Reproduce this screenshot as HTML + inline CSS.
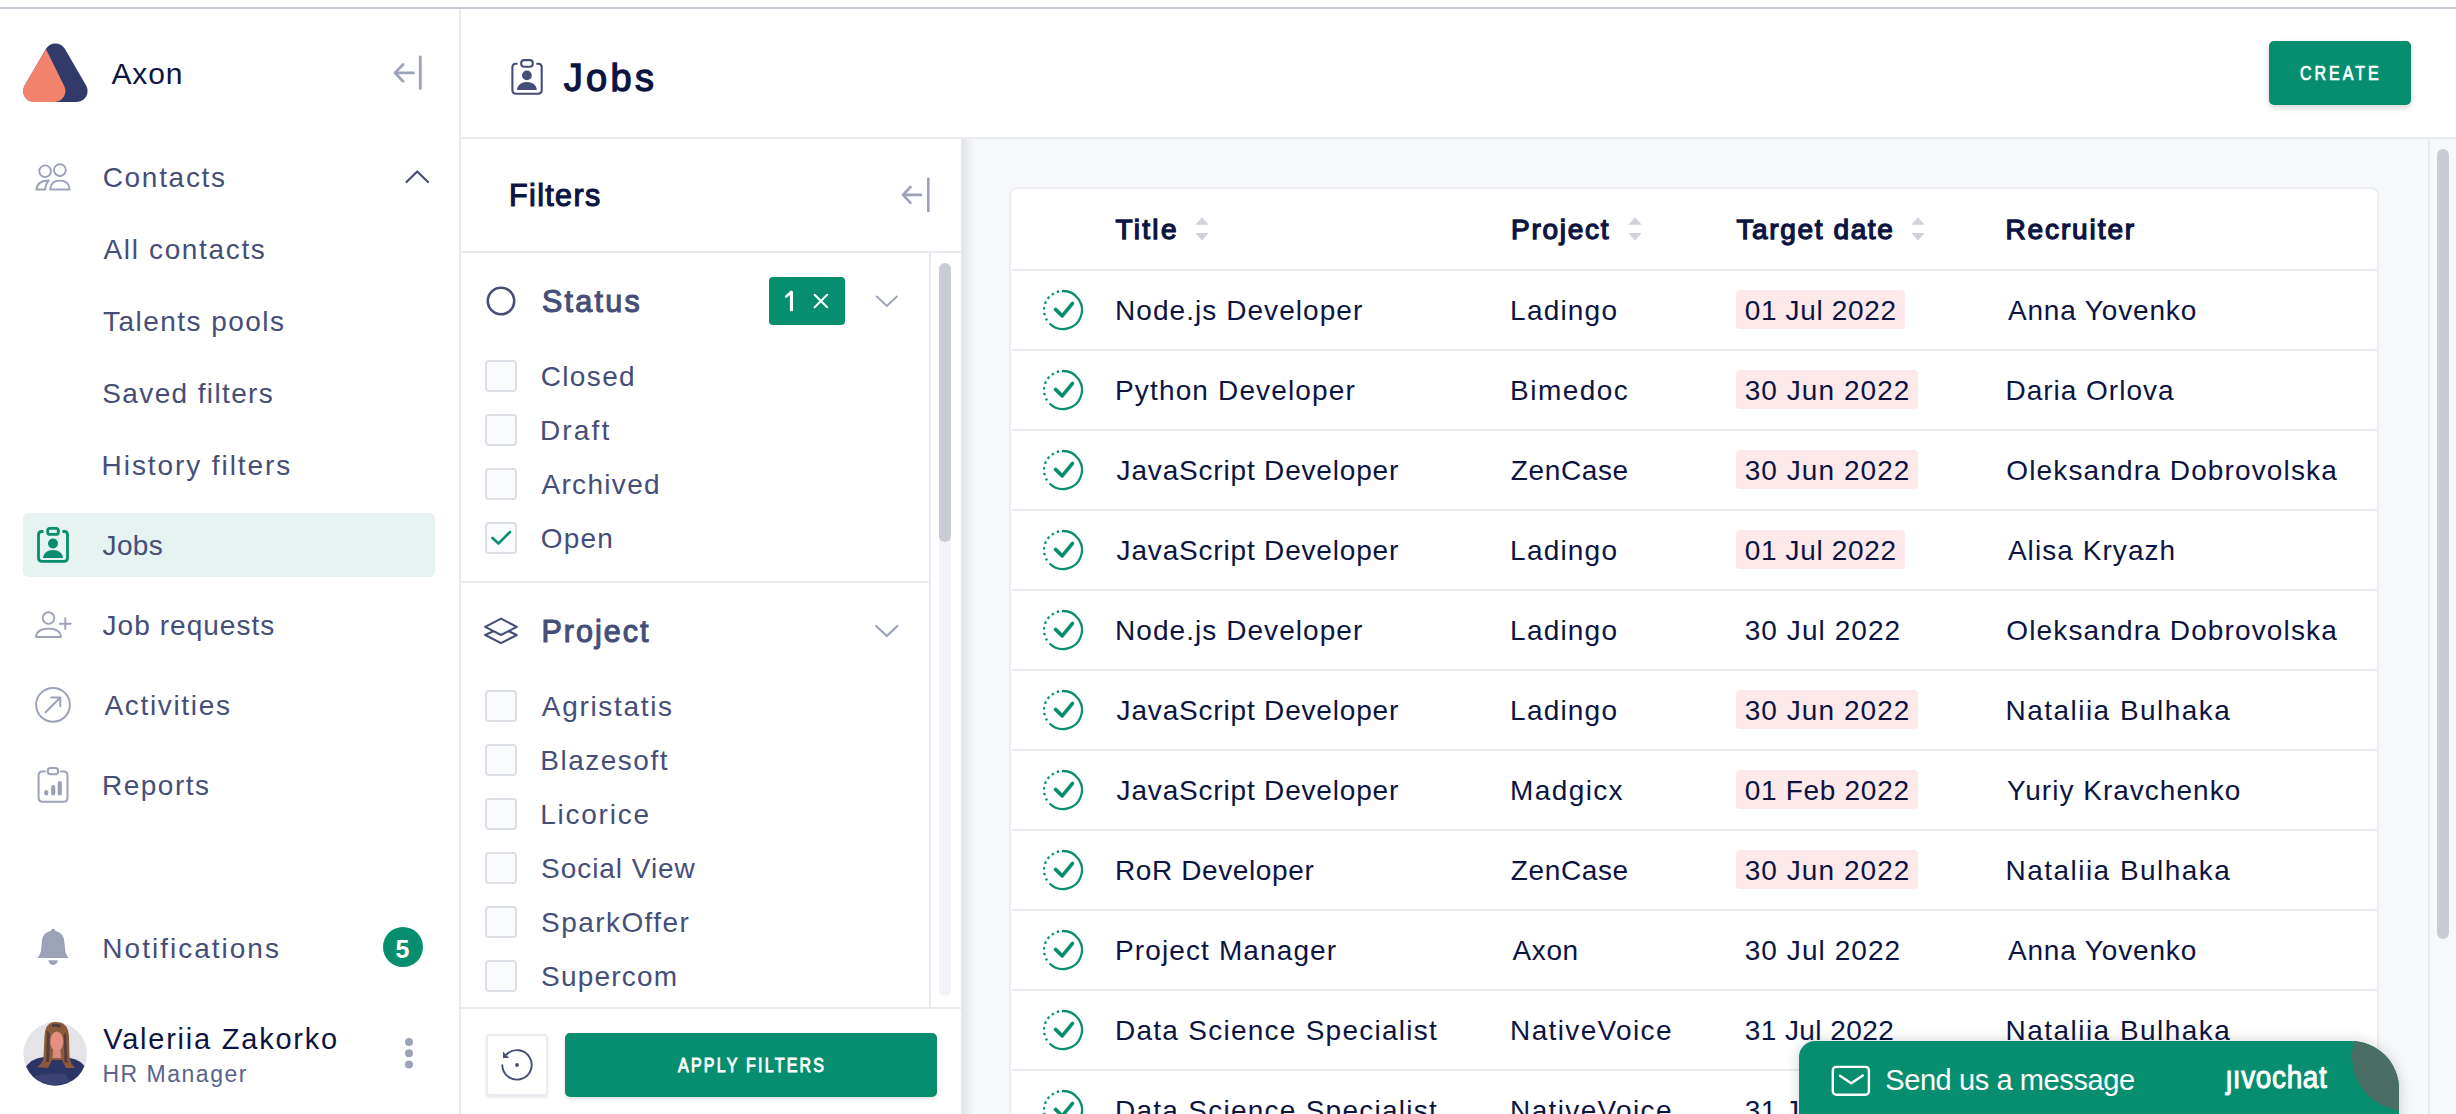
<!DOCTYPE html>
<html><head><meta charset="utf-8"><style>
html,body{margin:0;padding:0;width:2456px;height:1114px;overflow:hidden;background:#fff}
body{position:relative;font-family:"Liberation Sans",sans-serif}
.t{position:absolute;white-space:nowrap}
.r{position:absolute}
.s{position:absolute;overflow:visible}
</style></head><body>
<div class="r" style="left:0px;top:0px;width:2456px;height:1114px;background:#fff"></div>
<div class="r" style="left:0px;top:7px;width:2456px;height:2px;background:#c6c9d3"></div>
<div class="r" style="left:459px;top:9px;width:2px;height:1105px;background:#e9ebf0"></div>
<div class="r" style="left:461px;top:137px;width:1995px;height:2px;background:#e9ebf0"></div>
<div class="r" style="left:962px;top:139px;width:1494px;height:975px;background:#f7f8fa"></div>
<div class="r" style="left:961px;top:139px;width:14px;height:975px;background:linear-gradient(to right, rgba(30,40,80,0.10), rgba(30,40,80,0))"></div>
<div class="r" style="left:461px;top:251px;width:500px;height:2px;background:#e9ebf0"></div>
<svg class="s" style="left:20px;top:40px" width="72" height="66" viewBox="20 40 72 66"><path d="M45.84,49.08 A11,11 0 0 1 64.96,49.08 L86.14,85.52 A11,11 0 0 1 76.65,102 L34.15,102 A11,11 0 0 1 24.66,85.52 Z" fill="#323a6a"/><path d="M45.9,49 L64.29,86.14 A11,11 0 0 1 54.45,102 L34.15,102 A11,11 0 0 1 24.66,85.52 Z" fill="#f3836c"/></svg>
<div class="t" style="left:111.48px;top:59.21px;font-size:30px;line-height:30px;color:#0c1442;font-weight:400;letter-spacing:0.840px;">Axon</div>
<svg class="s" style="left:385px;top:50px" width="45" height="45" viewBox="385 50 45 45"><g stroke="#9ca3b8" stroke-width="2.8" fill="none" stroke-linecap="round" stroke-linejoin="round"><path d="M395,72.9 H413.5 M403,64.5 L395,72.9 L403,81.3"/><path d="M420.3,57 V88.5"/></g></svg>
<svg class="s" style="left:30px;top:158px" width="46" height="38" viewBox="30 158 46 38"><g stroke="#9ca3b8" stroke-width="1.9" fill="none" stroke-linejoin="round"><circle cx="45.1" cy="171.2" r="5.8"/><circle cx="59.9" cy="170.1" r="5.9"/><path d="M50.2,189.5 C50.5,184 54,180.6 59.9,180.6 C65.8,180.6 69.3,184 69.6,189.5 Z"/><path d="M48.8,180.5 C41,180.5 37,184 36.3,189.5 L45.3,189.5 C45.3,186 46.5,183 48.8,180.5 Z"/></g></svg>
<div class="t" style="left:102.68px;top:164.00px;font-size:28px;line-height:28px;color:#454e79;font-weight:400;letter-spacing:1.700px;">Contacts</div>
<svg class="s" style="left:400px;top:165px" width="34" height="24" viewBox="400 165 34 24"><path d="M406.5,182 L417.2,171.5 L428,182" stroke="#454e79" stroke-width="2.2" fill="none" stroke-linecap="round" stroke-linejoin="round"/></svg>
<div class="t" style="left:103.48px;top:236.10px;font-size:28px;line-height:28px;color:#454e79;font-weight:400;letter-spacing:1.656px;">All contacts</div>
<div class="t" style="left:103.10px;top:308.10px;font-size:28px;line-height:28px;color:#454e79;font-weight:400;letter-spacing:1.447px;">Talents pools</div>
<div class="t" style="left:102.30px;top:380.10px;font-size:28px;line-height:28px;color:#454e79;font-weight:400;letter-spacing:1.367px;">Saved filters</div>
<div class="t" style="left:101.60px;top:452.10px;font-size:28px;line-height:28px;color:#454e79;font-weight:400;letter-spacing:1.923px;">History filters</div>
<div class="r" style="left:23px;top:513px;width:412px;height:64px;background:#e6f3f1;border-radius:6px"></div>
<svg class="s" style="left:32px;top:522px" width="44" height="46" viewBox="32 522 44 46"><g stroke="#068e6f" stroke-width="2.8" fill="none"><path d="M43.5,531.5 H41.5 Q38.5,531.5 38.5,535 V558 Q38.5,561.4 42,561.4 H64 Q67.5,561.4 67.5,558 V535 Q67.5,531.5 64.5,531.5 H62.5"/><rect x="47.6" y="528.4" width="10.8" height="6" rx="2.5"/></g><circle cx="53" cy="543.5" r="5" fill="#068e6f"/><path d="M43,558 C43.5,553 47.5,550 53,550 C58.5,550 62.5,553 63,558 Z" fill="#068e6f"/></svg>
<div class="t" style="left:102.58px;top:532.20px;font-size:28px;line-height:28px;color:#454e79;font-weight:400;letter-spacing:0.313px;">Jobs</div>
<svg class="s" style="left:30px;top:606px" width="46" height="38" viewBox="30 606 46 38"><g stroke="#9ca3b8" stroke-width="1.9" fill="none" stroke-linecap="round" stroke-linejoin="round"><circle cx="48.5" cy="618.1" r="5.8"/><path d="M36,637 C36.5,631.5 41,628.6 48.5,628.6 C56,628.6 60.5,631.5 61,637 Z"/><path d="M65.3,618.3 V629.1 M59.9,623.7 H70.7"/></g></svg>
<div class="t" style="left:102.58px;top:612.20px;font-size:28px;line-height:28px;color:#454e79;font-weight:400;letter-spacing:1.038px;">Job requests</div>
<svg class="s" style="left:30px;top:682px" width="46" height="46" viewBox="30 682 46 46"><g stroke="#9ca3b8" stroke-width="2" fill="none" stroke-linecap="round" stroke-linejoin="round"><circle cx="53" cy="704.8" r="16.9"/><path d="M45.6,712.2 L60.3,697.5 M51.2,697.5 H60.3 V706.3"/></g></svg>
<div class="t" style="left:104.38px;top:692.40px;font-size:28px;line-height:28px;color:#454e79;font-weight:400;letter-spacing:1.682px;">Activities</div>
<svg class="s" style="left:30px;top:762px" width="46" height="46" viewBox="30 762 46 46"><g stroke="#9ca3b8" stroke-width="2" fill="none" stroke-linecap="round" stroke-linejoin="round"><path d="M45,771.5 H42.5 Q38.6,771.5 38.6,775.5 V797.7 Q38.6,801.7 42.5,801.7 H63.5 Q67.5,801.7 67.5,797.7 V775.5 Q67.5,771.5 63.5,771.5 H61"/><rect x="47.7" y="768" width="10.5" height="6.2" rx="3"/></g><g stroke="#9ca3b8" stroke-width="4.2" stroke-linecap="round"><path d="M46.2,792 V793.5 M53.2,787.2 V793.5 M59.8,783.2 V793.5"/></g></svg>
<div class="t" style="left:101.98px;top:772.10px;font-size:28px;line-height:28px;color:#454e79;font-weight:400;letter-spacing:1.513px;">Reports</div>
<svg class="s" style="left:32px;top:924px" width="42" height="46" viewBox="32 924 42 46"><path d="M53.1,928.7 C54.3,928.7 55.1,929.5 55.3,930.9 C60.7,932 64.2,935.8 64.3,941.5 L65.3,951 C65.8,954 67.2,956 68.8,957.9 L37.4,957.9 C39,956 40.4,954 40.9,951 L41.9,941.5 C42,935.8 45.5,932 50.9,930.9 C51.1,929.5 51.9,928.7 53.1,928.7 Z" fill="#9ca3b8"/><path d="M48.3,960.3 H57.9 C57.4,963.2 55.5,964.9 53.1,964.9 C50.7,964.9 48.8,963.2 48.3,960.3 Z" fill="#9ca3b8"/></svg>
<div class="t" style="left:102.36px;top:934.50px;font-size:28px;line-height:28px;color:#454e79;font-weight:400;letter-spacing:2.007px;">Notifications</div>
<div class="r" style="left:383px;top:927px;width:40px;height:40px;border-radius:50%;background:#068e6f"></div>
<div class="t" style="left:395.50px;top:936.74px;font-size:25px;line-height:25px;color:#fff;font-weight:700;letter-spacing:0.000px;">5</div>
<svg class="s" style="left:22px;top:1021px" width="66" height="66" viewBox="22 1021 66 66"><defs><clipPath id="av"><circle cx="55.2" cy="1053.9" r="31.8"/></clipPath></defs><g clip-path="url(#av)"><rect x="22" y="1021" width="66" height="66" fill="#e3e3e8"/><path d="M22,1090 L24,1070 Q30,1058 44,1057 L70,1058 Q83,1060 88,1072 L88,1090 Z" fill="#2d3466"/><path d="M56,1021.5 Q45,1022 44.5,1036 L43.5,1058 Q42,1064 37,1067 L48,1068 L52,1060 L62,1060 L66,1068 L75,1068 Q70,1063 69.5,1056 L69,1036 Q68,1022 56,1021.5 Z" fill="#8a5b3a"/><path d="M47,1030 L46,1062 L49,1062 L50,1034 Z M66,1032 L67.5,1063 L64.5,1062 L63.5,1036 Z M52,1024 Q56,1023 61,1025 L60,1028 Q56,1026 52,1027 Z" fill="#2a2440" opacity="0.55"/><ellipse cx="56.8" cy="1041.5" rx="6.6" ry="10" fill="#e48f7f"/><path d="M53,1050 L60.5,1050 L61,1058 L52.5,1058 Z" fill="#d98a7c"/><path d="M24,1080 Q40,1072 66,1074 L70,1082 L30,1090 Z" fill="#4b5282" opacity="0.5"/></g></svg>
<div class="t" style="left:103.24px;top:1025.05px;font-size:29px;line-height:29px;color:#0c1442;font-weight:400;letter-spacing:1.768px;">Valeriia Zakorko</div>
<div class="t" style="left:102.40px;top:1063.43px;font-size:23px;line-height:23px;color:#5a638a;font-weight:400;letter-spacing:1.520px;">HR Manager</div>
<svg class="s" style="left:400px;top:1032px" width="20" height="42" viewBox="400 1032 20 42"><g fill="#9ca3b8"><circle cx="409" cy="1042" r="4"/><circle cx="409" cy="1053.3" r="4"/><circle cx="409" cy="1064.6" r="4"/></g></svg>
<svg class="s" style="left:505px;top:52px" width="45" height="50" viewBox="505 52 45 50"><g stroke="#454e79" stroke-width="2.1" fill="none"><path d="M517.5,63.7 H515.8 Q512.4,63.7 512.4,67.5 V90 Q512.4,93.7 516,93.7 H538 Q541.7,93.7 541.7,90 V67.5 Q541.7,63.7 538.5,63.7 H536.3"/><rect x="521.2" y="60.1" width="11.6" height="6.7" rx="3"/></g><circle cx="526.9" cy="75.4" r="4.9" fill="#454e79"/><path d="M517,89.9 C517.5,85 521.5,82.1 526.9,82.1 C532.3,82.1 536.3,85 536.8,89.9 Z" fill="#454e79"/></svg>
<div class="t" style="left:563.66px;top:59.13px;font-size:38px;line-height:38px;color:#0c1442;font-weight:400;letter-spacing:3.333px;-webkit-text-stroke:1.3px #0c1442;">Jobs</div>
<div class="r" style="left:2269px;top:41px;width:142px;height:64px;background:#068e6f;border-radius:5px;box-shadow:0 3px 6px rgba(0,0,0,0.16)"></div>
<div class="t" style="left:2300.20px;top:64.29px;font-size:19.5px;line-height:19.5px;color:#fff;font-weight:400;letter-spacing:3.659px;-webkit-text-stroke:0.7px #fff;transform:scaleX(0.82);transform-origin:0 0;">CREATE</div>
<div class="t" style="left:509.02px;top:179.68px;font-size:30.5px;line-height:30.5px;color:#0c1442;font-weight:400;letter-spacing:1.360px;-webkit-text-stroke:1.1px #0c1442;">Filters</div>
<svg class="s" style="left:895px;top:172px" width="40" height="45" viewBox="895 172 40 45"><g stroke="#9ca3b8" stroke-width="2.6" fill="none" stroke-linecap="round" stroke-linejoin="round"><path d="M903,194.9 H921 M910.5,187 L903,194.9 L910.5,202.8"/><path d="M928.3,178.8 V211"/></g></svg>
<div class="r" style="left:929px;top:253px;width:2px;height:755px;background:#e9ebf0"></div>
<div class="r" style="left:939px;top:263px;width:12px;height:733px;background:#f3f4f7;border-radius:6px"></div>
<div class="r" style="left:939px;top:263px;width:12px;height:279px;background:#c9ccd5;border-radius:6px"></div>
<svg class="s" style="left:482px;top:283px" width="38" height="36" viewBox="482 283 38 36"><circle cx="501" cy="301" r="13.2" stroke="#454e79" stroke-width="2.6" fill="none"/></svg>
<div class="t" style="left:541.94px;top:285.98px;font-size:30.5px;line-height:30.5px;color:#454e79;font-weight:400;letter-spacing:2.272px;-webkit-text-stroke:1.1px #454e79;">Status</div>
<div class="r" style="left:769px;top:277px;width:76px;height:48px;background:#068e6f;border-radius:4px"></div>
<svg class="s" style="left:780px;top:286px" width="20" height="30" viewBox="780 286 20 30"><path d="M791.45,291.6 V311.2" stroke="#fff" stroke-width="3.1"/><path d="M786.2,296.4 L791.4,292" stroke="#fff" stroke-width="2.6" stroke-linecap="round"/></svg>
<svg class="s" style="left:808px;top:289px" width="26" height="24" viewBox="808 289 26 24"><path d="M814.6,294.7 L827.2,307.3 M827.2,294.7 L814.6,307.3" stroke="#fff" stroke-width="2" stroke-linecap="round"/></svg>
<svg class="s" style="left:870px;top:288px" width="30" height="24" viewBox="870 288 30 24"><path d="M876.2,296 L886.8,306 L897.4,296" stroke="#9ca3b8" stroke-width="1.9" fill="none" stroke-linecap="butt" stroke-linejoin="miter"/></svg>
<div class="r" style="left:485px;top:360px;width:32px;height:32px;box-sizing:border-box;border:2px solid #dcdfe5;border-radius:4px;background:#fafbfc"></div>
<div class="t" style="left:540.68px;top:363.20px;font-size:28px;line-height:28px;color:#454e79;font-weight:400;letter-spacing:1.364px;">Closed</div>
<div class="r" style="left:485px;top:414px;width:32px;height:32px;box-sizing:border-box;border:2px solid #dcdfe5;border-radius:4px;background:#fafbfc"></div>
<div class="t" style="left:539.88px;top:417.20px;font-size:28px;line-height:28px;color:#454e79;font-weight:400;letter-spacing:2.160px;">Draft</div>
<div class="r" style="left:485px;top:468px;width:32px;height:32px;box-sizing:border-box;border:2px solid #dcdfe5;border-radius:4px;background:#fafbfc"></div>
<div class="t" style="left:541.48px;top:471.20px;font-size:28px;line-height:28px;color:#454e79;font-weight:400;letter-spacing:1.311px;">Archived</div>
<div class="r" style="left:485px;top:522px;width:32px;height:32px;box-sizing:border-box;border:2px solid #dcdfe5;border-radius:4px;background:#fafbfc"></div>
<svg class="s" style="left:485px;top:522px" width="32" height="32" viewBox="485 522 32 32"><path d="M492.5,538 L498.5,543.5 L510,532" stroke="#068e6f" stroke-width="2.6" fill="none" stroke-linecap="round" stroke-linejoin="round"/></svg>
<div class="t" style="left:540.68px;top:525.20px;font-size:28px;line-height:28px;color:#454e79;font-weight:400;letter-spacing:1.247px;">Open</div>
<div class="r" style="left:461px;top:581px;width:468px;height:2px;background:#e9ebf0"></div>
<svg class="s" style="left:480px;top:612px" width="42" height="38" viewBox="480 612 42 38"><g stroke="#454e79" stroke-width="2.1" fill="none" stroke-linejoin="round"><path d="M493.3,631.2 L485.2,635 L501,643.1 L516.8,635 L508.7,631.2"/><path d="M485.2,626.9 L501,618.6 L516.8,626.9 L501,635 Z" fill="#fff"/></g></svg>
<div class="t" style="left:541.40px;top:616.08px;font-size:30.5px;line-height:30.5px;color:#454e79;font-weight:400;letter-spacing:2.040px;-webkit-text-stroke:1.1px #454e79;">Project</div>
<svg class="s" style="left:868px;top:618px" width="34" height="24" viewBox="868 618 34 24"><path d="M876.2,626 L886.8,636 L897.4,626" stroke="#9ca3b8" stroke-width="2.2" fill="none" stroke-linecap="round" stroke-linejoin="round"/></svg>
<div class="r" style="left:485px;top:690px;width:32px;height:32px;box-sizing:border-box;border:2px solid #dcdfe5;border-radius:4px;background:#fafbfc"></div>
<div class="t" style="left:541.86px;top:693.00px;font-size:28px;line-height:28px;color:#454e79;font-weight:400;letter-spacing:1.673px;">Agristatis</div>
<div class="r" style="left:485px;top:744px;width:32px;height:32px;box-sizing:border-box;border:2px solid #dcdfe5;border-radius:4px;background:#fafbfc"></div>
<div class="t" style="left:540.26px;top:747.00px;font-size:28px;line-height:28px;color:#454e79;font-weight:400;letter-spacing:1.510px;">Blazesoft</div>
<div class="r" style="left:485px;top:798px;width:32px;height:32px;box-sizing:border-box;border:2px solid #dcdfe5;border-radius:4px;background:#fafbfc"></div>
<div class="t" style="left:540.26px;top:801.00px;font-size:28px;line-height:28px;color:#454e79;font-weight:400;letter-spacing:1.746px;">Licorice</div>
<div class="r" style="left:485px;top:852px;width:32px;height:32px;box-sizing:border-box;border:2px solid #dcdfe5;border-radius:4px;background:#fafbfc"></div>
<div class="t" style="left:541.06px;top:855.00px;font-size:28px;line-height:28px;color:#454e79;font-weight:400;letter-spacing:0.956px;">Social View</div>
<div class="r" style="left:485px;top:906px;width:32px;height:32px;box-sizing:border-box;border:2px solid #dcdfe5;border-radius:4px;background:#fafbfc"></div>
<div class="t" style="left:541.06px;top:909.00px;font-size:28px;line-height:28px;color:#454e79;font-weight:400;letter-spacing:1.442px;">SparkOffer</div>
<div class="r" style="left:485px;top:960px;width:32px;height:32px;box-sizing:border-box;border:2px solid #dcdfe5;border-radius:4px;background:#fafbfc"></div>
<div class="t" style="left:541.06px;top:963.00px;font-size:28px;line-height:28px;color:#454e79;font-weight:400;letter-spacing:1.186px;">Supercom</div>
<div class="r" style="left:461px;top:1007px;width:500px;height:2px;background:#e9ebf0"></div>
<div class="r" style="left:486px;top:1034px;width:62px;height:62px;box-sizing:border-box;background:#fff;border:2px solid #eaecf1;border-radius:4px;box-shadow:0 2px 3px rgba(30,40,80,0.10)"></div>
<svg class="s" style="left:495px;top:1043px" width="44" height="44" viewBox="495 1043 44 44"><g stroke="#454e79" stroke-width="1.9" fill="none" stroke-linecap="round"><path d="M502.3,1065.2 A14.7,14.7 0 1 0 506.6,1054.5"/></g><path d="M503,1051.4 L503,1057.9 L509.2,1057.9 Z" fill="#454e79"/><circle cx="517" cy="1065" r="1.9" fill="#454e79"/></svg>
<div class="r" style="left:565px;top:1033px;width:372px;height:64px;background:#068e6f;border-radius:5px;box-shadow:0 2px 4px rgba(0,0,0,0.12)"></div>
<div class="t" style="left:677.92px;top:1056.29px;font-size:19.5px;line-height:19.5px;color:#fff;font-weight:400;letter-spacing:2.738px;-webkit-text-stroke:0.9px #fff;transform:scaleX(0.82);transform-origin:0 0;">APPLY FILTERS</div>
<div class="r" style="left:2428px;top:139px;width:2px;height:975px;background:#e9ebf0"></div>
<div class="r" style="left:2437px;top:149px;width:12px;height:790px;background:#c9ccd5;border-radius:6px"></div>
<div class="r" style="left:1009px;top:187px;width:1370px;height:1000px;box-sizing:border-box;background:#fff;border:2px solid #eceef2;border-radius:8px"></div>
<div class="t" style="left:1115.40px;top:216.10px;font-size:28px;line-height:28px;color:#0c1442;font-weight:400;letter-spacing:2.300px;-webkit-text-stroke:1.3px #0c1442;">Title</div>
<svg class="s" style="left:1194px;top:214px" width="16" height="30" viewBox="1194 214 16 30"><path d="M1202,217.3 L1195.3,224.8 L1208.7,224.8 Z M1195.3,233.1 L1208.7,233.1 L1202,240.6 Z" fill="#d0d3da"/></svg>
<div class="t" style="left:1511.10px;top:216.10px;font-size:28px;line-height:28px;color:#0c1442;font-weight:400;letter-spacing:1.700px;-webkit-text-stroke:1.3px #0c1442;">Project</div>
<svg class="s" style="left:1627px;top:214px" width="16" height="30" viewBox="1627 214 16 30"><path d="M1635,217.3 L1628.3,224.8 L1641.7,224.8 Z M1628.3,233.1 L1641.7,233.1 L1635,240.6 Z" fill="#d0d3da"/></svg>
<div class="t" style="left:1736.50px;top:216.10px;font-size:28px;line-height:28px;color:#0c1442;font-weight:400;letter-spacing:1.620px;-webkit-text-stroke:1.3px #0c1442;">Target date</div>
<svg class="s" style="left:1910px;top:214px" width="16" height="30" viewBox="1910 214 16 30"><path d="M1918,217.3 L1911.3,224.8 L1924.7,224.8 Z M1911.3,233.1 L1924.7,233.1 L1918,240.6 Z" fill="#d0d3da"/></svg>
<div class="t" style="left:2005.40px;top:216.10px;font-size:28px;line-height:28px;color:#0c1442;font-weight:400;letter-spacing:1.900px;-webkit-text-stroke:1.3px #0c1442;">Recruiter</div>
<div class="r" style="left:1012px;top:269px;width:1365px;height:2px;background:#e9ebf0"></div>
<svg class="s" style="left:1038.7px;top:285.9px" width="48" height="48" viewBox="1038.7 285.9 48 48"><g stroke="#068e6f" fill="none"><path d="M1061.71,290.93 A19,19 0 1 1 1049.26,323.34" stroke-width="2.3"/><path d="M1046.77,320.25 A19,19 0 0 1 1059.07,291.25" stroke-width="2.3" stroke-dasharray="2.4 3.3"/><path d="M1055.20,309.30 L1061.90,315.80 L1072.20,303.20" stroke-width="3.6" stroke-linecap="round" stroke-linejoin="round"/></g></svg>
<div class="t" style="left:1115.02px;top:297.40px;font-size:28px;line-height:28px;color:#0c1442;font-weight:400;letter-spacing:1.055px;">Node.js Developer</div>
<div class="t" style="left:1510.12px;top:297.40px;font-size:28px;line-height:28px;color:#0c1442;font-weight:400;letter-spacing:1.200px;">Ladingo</div>
<div class="r" style="left:1736px;top:290px;width:169px;height:39px;background:#fde8ea;border-radius:4px"></div>
<div class="t" style="left:1744.72px;top:297.40px;font-size:28px;line-height:28px;color:#0c1442;font-weight:400;letter-spacing:0.648px;">01 Jul 2022</div>
<div class="t" style="left:2007.90px;top:297.40px;font-size:28px;line-height:28px;color:#0c1442;font-weight:400;letter-spacing:0.847px;">Anna Yovenko</div>
<div class="r" style="left:1012px;top:349px;width:1365px;height:2px;background:#e9ebf0"></div>
<svg class="s" style="left:1038.7px;top:365.9px" width="48" height="48" viewBox="1038.7 365.9 48 48"><g stroke="#068e6f" fill="none"><path d="M1061.71,370.93 A19,19 0 1 1 1049.26,403.34" stroke-width="2.3"/><path d="M1046.77,400.25 A19,19 0 0 1 1059.07,371.25" stroke-width="2.3" stroke-dasharray="2.4 3.3"/><path d="M1055.20,389.30 L1061.90,395.80 L1072.20,383.20" stroke-width="3.6" stroke-linecap="round" stroke-linejoin="round"/></g></svg>
<div class="t" style="left:1115.02px;top:377.40px;font-size:28px;line-height:28px;color:#0c1442;font-weight:400;letter-spacing:1.149px;">Python Developer</div>
<div class="t" style="left:1510.12px;top:377.40px;font-size:28px;line-height:28px;color:#0c1442;font-weight:400;letter-spacing:1.440px;">Bimedoc</div>
<div class="r" style="left:1736px;top:370px;width:182px;height:39px;background:#fde8ea;border-radius:4px"></div>
<div class="t" style="left:1744.72px;top:377.40px;font-size:28px;line-height:28px;color:#0c1442;font-weight:400;letter-spacing:1.056px;">30 Jun 2022</div>
<div class="t" style="left:2005.50px;top:377.40px;font-size:28px;line-height:28px;color:#0c1442;font-weight:400;letter-spacing:0.985px;">Daria Orlova</div>
<div class="r" style="left:1012px;top:429px;width:1365px;height:2px;background:#e9ebf0"></div>
<svg class="s" style="left:1038.7px;top:445.9px" width="48" height="48" viewBox="1038.7 445.9 48 48"><g stroke="#068e6f" fill="none"><path d="M1061.71,450.93 A19,19 0 1 1 1049.26,483.34" stroke-width="2.3"/><path d="M1046.77,480.25 A19,19 0 0 1 1059.07,451.25" stroke-width="2.3" stroke-dasharray="2.4 3.3"/><path d="M1055.20,469.30 L1061.90,475.80 L1072.20,463.20" stroke-width="3.6" stroke-linecap="round" stroke-linejoin="round"/></g></svg>
<div class="t" style="left:1116.62px;top:457.40px;font-size:28px;line-height:28px;color:#0c1442;font-weight:400;letter-spacing:0.819px;">JavaScript Developer</div>
<div class="t" style="left:1510.86px;top:457.40px;font-size:28px;line-height:28px;color:#0c1442;font-weight:400;letter-spacing:0.600px;">ZenCase</div>
<div class="r" style="left:1736px;top:450px;width:182px;height:39px;background:#fde8ea;border-radius:4px"></div>
<div class="t" style="left:1744.72px;top:457.40px;font-size:28px;line-height:28px;color:#0c1442;font-weight:400;letter-spacing:1.056px;">30 Jun 2022</div>
<div class="t" style="left:2006.30px;top:457.40px;font-size:28px;line-height:28px;color:#0c1442;font-weight:400;letter-spacing:1.137px;">Oleksandra Dobrovolska</div>
<div class="r" style="left:1012px;top:509px;width:1365px;height:2px;background:#e9ebf0"></div>
<svg class="s" style="left:1038.7px;top:525.9px" width="48" height="48" viewBox="1038.7 525.9 48 48"><g stroke="#068e6f" fill="none"><path d="M1061.71,530.93 A19,19 0 1 1 1049.26,563.34" stroke-width="2.3"/><path d="M1046.77,560.25 A19,19 0 0 1 1059.07,531.25" stroke-width="2.3" stroke-dasharray="2.4 3.3"/><path d="M1055.20,549.30 L1061.90,555.80 L1072.20,543.20" stroke-width="3.6" stroke-linecap="round" stroke-linejoin="round"/></g></svg>
<div class="t" style="left:1116.62px;top:537.40px;font-size:28px;line-height:28px;color:#0c1442;font-weight:400;letter-spacing:0.819px;">JavaScript Developer</div>
<div class="t" style="left:1510.12px;top:537.40px;font-size:28px;line-height:28px;color:#0c1442;font-weight:400;letter-spacing:1.200px;">Ladingo</div>
<div class="r" style="left:1736px;top:530px;width:169px;height:39px;background:#fde8ea;border-radius:4px"></div>
<div class="t" style="left:1744.72px;top:537.40px;font-size:28px;line-height:28px;color:#0c1442;font-weight:400;letter-spacing:0.648px;">01 Jul 2022</div>
<div class="t" style="left:2007.90px;top:537.40px;font-size:28px;line-height:28px;color:#0c1442;font-weight:400;letter-spacing:1.058px;">Alisa Kryazh</div>
<div class="r" style="left:1012px;top:589px;width:1365px;height:2px;background:#e9ebf0"></div>
<svg class="s" style="left:1038.7px;top:605.9px" width="48" height="48" viewBox="1038.7 605.9 48 48"><g stroke="#068e6f" fill="none"><path d="M1061.71,610.93 A19,19 0 1 1 1049.26,643.34" stroke-width="2.3"/><path d="M1046.77,640.25 A19,19 0 0 1 1059.07,611.25" stroke-width="2.3" stroke-dasharray="2.4 3.3"/><path d="M1055.20,629.30 L1061.90,635.80 L1072.20,623.20" stroke-width="3.6" stroke-linecap="round" stroke-linejoin="round"/></g></svg>
<div class="t" style="left:1115.02px;top:617.40px;font-size:28px;line-height:28px;color:#0c1442;font-weight:400;letter-spacing:1.055px;">Node.js Developer</div>
<div class="t" style="left:1510.12px;top:617.40px;font-size:28px;line-height:28px;color:#0c1442;font-weight:400;letter-spacing:1.200px;">Ladingo</div>
<div class="t" style="left:1744.72px;top:617.40px;font-size:28px;line-height:28px;color:#0c1442;font-weight:400;letter-spacing:1.064px;">30 Jul 2022</div>
<div class="t" style="left:2006.30px;top:617.40px;font-size:28px;line-height:28px;color:#0c1442;font-weight:400;letter-spacing:1.137px;">Oleksandra Dobrovolska</div>
<div class="r" style="left:1012px;top:669px;width:1365px;height:2px;background:#e9ebf0"></div>
<svg class="s" style="left:1038.7px;top:685.9px" width="48" height="48" viewBox="1038.7 685.9 48 48"><g stroke="#068e6f" fill="none"><path d="M1061.71,690.93 A19,19 0 1 1 1049.26,723.34" stroke-width="2.3"/><path d="M1046.77,720.25 A19,19 0 0 1 1059.07,691.25" stroke-width="2.3" stroke-dasharray="2.4 3.3"/><path d="M1055.20,709.30 L1061.90,715.80 L1072.20,703.20" stroke-width="3.6" stroke-linecap="round" stroke-linejoin="round"/></g></svg>
<div class="t" style="left:1116.62px;top:697.40px;font-size:28px;line-height:28px;color:#0c1442;font-weight:400;letter-spacing:0.819px;">JavaScript Developer</div>
<div class="t" style="left:1510.12px;top:697.40px;font-size:28px;line-height:28px;color:#0c1442;font-weight:400;letter-spacing:1.200px;">Ladingo</div>
<div class="r" style="left:1736px;top:690px;width:182px;height:39px;background:#fde8ea;border-radius:4px"></div>
<div class="t" style="left:1744.72px;top:697.40px;font-size:28px;line-height:28px;color:#0c1442;font-weight:400;letter-spacing:1.056px;">30 Jun 2022</div>
<div class="t" style="left:2005.50px;top:697.40px;font-size:28px;line-height:28px;color:#0c1442;font-weight:400;letter-spacing:1.469px;">Nataliia Bulhaka</div>
<div class="r" style="left:1012px;top:749px;width:1365px;height:2px;background:#e9ebf0"></div>
<svg class="s" style="left:1038.7px;top:765.9px" width="48" height="48" viewBox="1038.7 765.9 48 48"><g stroke="#068e6f" fill="none"><path d="M1061.71,770.93 A19,19 0 1 1 1049.26,803.34" stroke-width="2.3"/><path d="M1046.77,800.25 A19,19 0 0 1 1059.07,771.25" stroke-width="2.3" stroke-dasharray="2.4 3.3"/><path d="M1055.20,789.30 L1061.90,795.80 L1072.20,783.20" stroke-width="3.6" stroke-linecap="round" stroke-linejoin="round"/></g></svg>
<div class="t" style="left:1116.62px;top:777.40px;font-size:28px;line-height:28px;color:#0c1442;font-weight:400;letter-spacing:0.819px;">JavaScript Developer</div>
<div class="t" style="left:1510.12px;top:777.40px;font-size:28px;line-height:28px;color:#0c1442;font-weight:400;letter-spacing:1.373px;">Madgicx</div>
<div class="r" style="left:1736px;top:770px;width:182px;height:39px;background:#fde8ea;border-radius:4px"></div>
<div class="t" style="left:1744.72px;top:777.40px;font-size:28px;line-height:28px;color:#0c1442;font-weight:400;letter-spacing:0.704px;">01 Feb 2022</div>
<div class="t" style="left:2007.10px;top:777.40px;font-size:28px;line-height:28px;color:#0c1442;font-weight:400;letter-spacing:1.016px;">Yuriy Kravchenko</div>
<div class="r" style="left:1012px;top:829px;width:1365px;height:2px;background:#e9ebf0"></div>
<svg class="s" style="left:1038.7px;top:845.9px" width="48" height="48" viewBox="1038.7 845.9 48 48"><g stroke="#068e6f" fill="none"><path d="M1061.71,850.93 A19,19 0 1 1 1049.26,883.34" stroke-width="2.3"/><path d="M1046.77,880.25 A19,19 0 0 1 1059.07,851.25" stroke-width="2.3" stroke-dasharray="2.4 3.3"/><path d="M1055.20,869.30 L1061.90,875.80 L1072.20,863.20" stroke-width="3.6" stroke-linecap="round" stroke-linejoin="round"/></g></svg>
<div class="t" style="left:1115.02px;top:857.40px;font-size:28px;line-height:28px;color:#0c1442;font-weight:400;letter-spacing:0.607px;">RoR Developer</div>
<div class="t" style="left:1510.86px;top:857.40px;font-size:28px;line-height:28px;color:#0c1442;font-weight:400;letter-spacing:0.600px;">ZenCase</div>
<div class="r" style="left:1736px;top:850px;width:182px;height:39px;background:#fde8ea;border-radius:4px"></div>
<div class="t" style="left:1744.72px;top:857.40px;font-size:28px;line-height:28px;color:#0c1442;font-weight:400;letter-spacing:1.056px;">30 Jun 2022</div>
<div class="t" style="left:2005.50px;top:857.40px;font-size:28px;line-height:28px;color:#0c1442;font-weight:400;letter-spacing:1.469px;">Nataliia Bulhaka</div>
<div class="r" style="left:1012px;top:909px;width:1365px;height:2px;background:#e9ebf0"></div>
<svg class="s" style="left:1038.7px;top:925.9px" width="48" height="48" viewBox="1038.7 925.9 48 48"><g stroke="#068e6f" fill="none"><path d="M1061.71,930.93 A19,19 0 1 1 1049.26,963.34" stroke-width="2.3"/><path d="M1046.77,960.25 A19,19 0 0 1 1059.07,931.25" stroke-width="2.3" stroke-dasharray="2.4 3.3"/><path d="M1055.20,949.30 L1061.90,955.80 L1072.20,943.20" stroke-width="3.6" stroke-linecap="round" stroke-linejoin="round"/></g></svg>
<div class="t" style="left:1115.02px;top:937.40px;font-size:28px;line-height:28px;color:#0c1442;font-weight:400;letter-spacing:1.120px;">Project Manager</div>
<div class="t" style="left:1512.52px;top:937.40px;font-size:28px;line-height:28px;color:#0c1442;font-weight:400;letter-spacing:0.600px;">Axon</div>
<div class="t" style="left:1744.72px;top:937.40px;font-size:28px;line-height:28px;color:#0c1442;font-weight:400;letter-spacing:1.064px;">30 Jul 2022</div>
<div class="t" style="left:2007.90px;top:937.40px;font-size:28px;line-height:28px;color:#0c1442;font-weight:400;letter-spacing:0.847px;">Anna Yovenko</div>
<div class="r" style="left:1012px;top:989px;width:1365px;height:2px;background:#e9ebf0"></div>
<svg class="s" style="left:1038.7px;top:1005.9000000000001px" width="48" height="48" viewBox="1038.7 1005.9000000000001 48 48"><g stroke="#068e6f" fill="none"><path d="M1061.71,1010.93 A19,19 0 1 1 1049.26,1043.34" stroke-width="2.3"/><path d="M1046.77,1040.25 A19,19 0 0 1 1059.07,1011.25" stroke-width="2.3" stroke-dasharray="2.4 3.3"/><path d="M1055.20,1029.30 L1061.90,1035.80 L1072.20,1023.20" stroke-width="3.6" stroke-linecap="round" stroke-linejoin="round"/></g></svg>
<div class="t" style="left:1115.02px;top:1017.40px;font-size:28px;line-height:28px;color:#0c1442;font-weight:400;letter-spacing:1.258px;">Data Science Specialist</div>
<div class="t" style="left:1510.12px;top:1017.40px;font-size:28px;line-height:28px;color:#0c1442;font-weight:400;letter-spacing:1.352px;">NativeVoice</div>
<div class="t" style="left:1744.72px;top:1017.40px;font-size:28px;line-height:28px;color:#0c1442;font-weight:400;letter-spacing:0.424px;">31 Jul 2022</div>
<div class="t" style="left:2005.50px;top:1017.40px;font-size:28px;line-height:28px;color:#0c1442;font-weight:400;letter-spacing:1.469px;">Nataliia Bulhaka</div>
<div class="r" style="left:1012px;top:1069px;width:1365px;height:2px;background:#e9ebf0"></div>
<svg class="s" style="left:1038.7px;top:1085.9px" width="48" height="48" viewBox="1038.7 1085.9 48 48"><g stroke="#068e6f" fill="none"><path d="M1061.71,1090.93 A19,19 0 1 1 1049.26,1123.34" stroke-width="2.3"/><path d="M1046.77,1120.25 A19,19 0 0 1 1059.07,1091.25" stroke-width="2.3" stroke-dasharray="2.4 3.3"/><path d="M1055.20,1109.30 L1061.90,1115.80 L1072.20,1103.20" stroke-width="3.6" stroke-linecap="round" stroke-linejoin="round"/></g></svg>
<div class="t" style="left:1115.02px;top:1097.40px;font-size:28px;line-height:28px;color:#0c1442;font-weight:400;letter-spacing:1.258px;">Data Science Specialist</div>
<div class="t" style="left:1510.12px;top:1097.40px;font-size:28px;line-height:28px;color:#0c1442;font-weight:400;letter-spacing:1.352px;">NativeVoice</div>
<div class="t" style="left:1744.72px;top:1097.40px;font-size:28px;line-height:28px;color:#0c1442;font-weight:400;letter-spacing:0.424px;">31 Jul 2022</div>
<div class="t" style="left:2005.50px;top:1097.40px;font-size:28px;line-height:28px;color:#0c1442;font-weight:400;letter-spacing:1.469px;">Nataliia Bulhaka</div>
<div class="r" style="left:1799px;top:1041px;width:600px;height:120px;background:#068e6f;border-radius:16px 48px 0 0;box-shadow:0 0 14px rgba(0,0,0,0.18);overflow:hidden"><div style="position:absolute;left:553px;top:-40px;width:110px;height:110px;border-radius:50%;background:#4b6e64"></div></div>
<svg class="s" style="left:1826px;top:1060px" width="50" height="42" viewBox="1826 1060 50 42"><g stroke="#fff" stroke-width="2.4" fill="none" stroke-linejoin="round" stroke-linecap="round"><rect x="1832.8" y="1066.9" width="36.1" height="27.8" rx="3.5"/><path d="M1840,1075.7 L1851.2,1083.3 L1862.8,1075.5"/></g></svg>
<div class="t" style="left:1885.22px;top:1065.65px;font-size:29px;line-height:29px;color:#fff;font-weight:400;letter-spacing:-0.405px;">Send us a message</div>
<div class="t" style="left:2225.60px;top:1062.36px;font-size:31px;line-height:31px;color:#fff;font-weight:400;letter-spacing:0.725px;-webkit-text-stroke:1.0px #fff;transform:scaleX(0.9);transform-origin:0 0;">&#x237;&#x131;vochat</div>
</body></html>
